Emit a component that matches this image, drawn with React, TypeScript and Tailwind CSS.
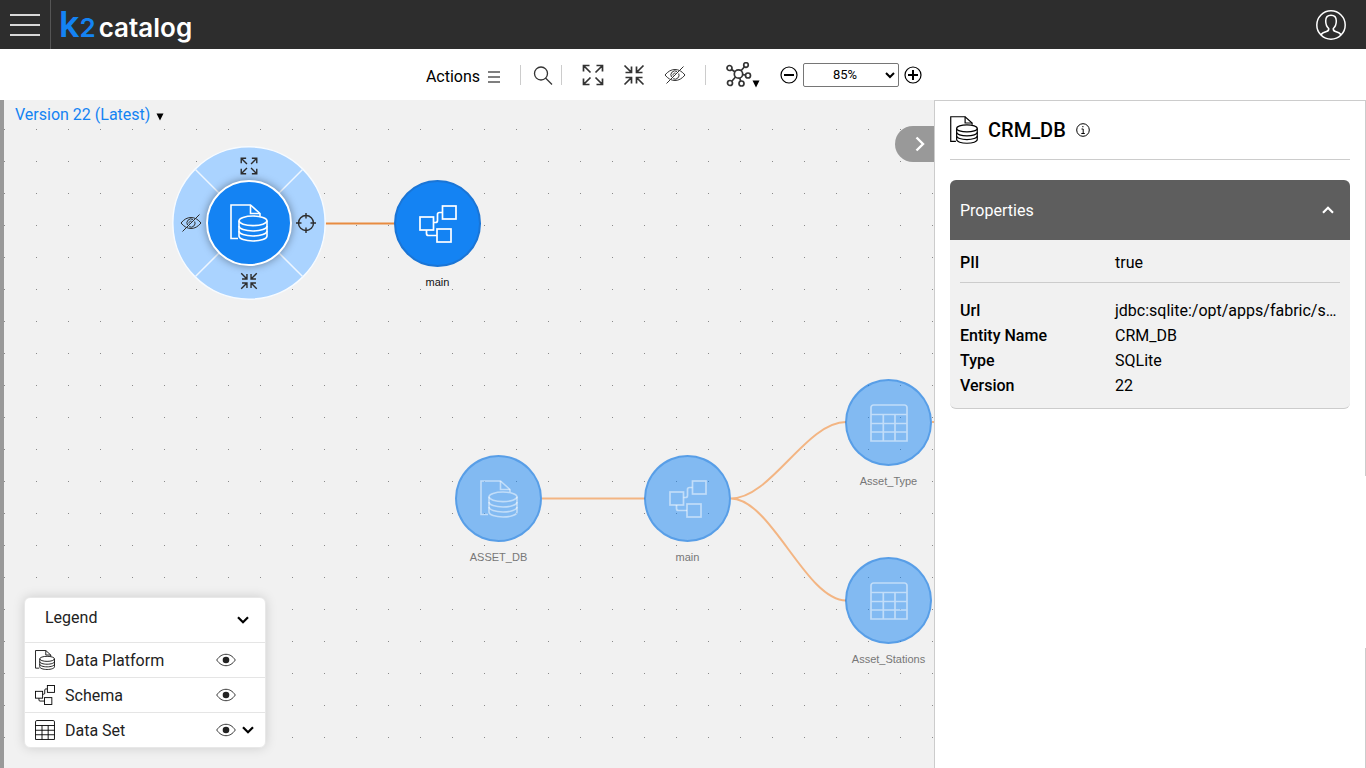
import { useState } from "react";
import type { ReactNode } from "react";

type IconProps = { className?: string };

function PlatformIcon({ className }: IconProps) {
  return (
    <svg className={className} viewBox="0 0 38 38" fill="none" stroke="currentColor" strokeWidth="1.6" aria-hidden="true">
      <path d="M8 34.5H1V1h19.5L30 9.5V12" />
      <path d="M20.5 1v8.5H30" />
      <ellipse cx="23" cy="16.8" rx="14" ry="4.8" />
      <path d="M9 16.8V32c0 2.8 6.3 5 14 5s14-2.2 14-5V16.8" />
      <path d="M9 22c0 2.8 6.3 5 14 5s14-2.2 14-5M9 27c0 2.8 6.3 5 14 5s14-2.2 14-5" />
    </svg>
  );
}

function SchemaIcon({ className }: IconProps) {
  return (
    <svg className={className} viewBox="0 0 38 38" fill="none" stroke="currentColor" strokeWidth="1.7" aria-hidden="true">
      <rect x="1" y="12" width="13.5" height="13" />
      <rect x="23.5" y="1" width="13.5" height="13" />
      <rect x="18" y="24" width="14" height="13" />
      <path d="M14.5 17.5h2a2 2 0 0 0 2-2v-6a2 2 0 0 1 2-2h3M7.5 25v3.5a2 2 0 0 0 2 2H18" />
    </svg>
  );
}

function TableIcon({ className }: IconProps) {
  return (
    <svg className={className} viewBox="0 0 38 38" fill="none" stroke="currentColor" strokeWidth="1.7" aria-hidden="true">
      <path d="M1 37V3.5A2.5 2.5 0 0 1 3.5 1h31A2.5 2.5 0 0 1 37 3.5V37zM1 10.5h36M1 19.5h36M1 28h36M13.3 10.5V37M25 10.5V37" />
    </svg>
  );
}

function ExpandIcon({ className }: IconProps) {
  return (
    <svg className={className} viewBox="0 0 22 22" fill="none" stroke="currentColor" strokeWidth="1.7" aria-hidden="true">
      <path d="M1.5 7.5v-6h6M1.5 1.5l7 7M14.5 1.5h6v6M20.5 1.5l-7 7M1.5 14.5v6h6M1.5 20.5l7-7M20.5 14.5v6h-6M20.5 20.5l-7-7" />
    </svg>
  );
}

function CollapseIcon({ className }: IconProps) {
  return (
    <svg className={className} viewBox="0 0 22 22" fill="none" stroke="currentColor" strokeWidth="1.7" aria-hidden="true">
      <path d="M8.5 2.5v6h-6M8.5 8.5l-7-7M13.5 2.5v6h6M13.5 8.5l7-7M8.5 19.5v-6h-6M8.5 13.5l-7 7M13.5 19.5v-6h6M13.5 13.5l7 7" />
    </svg>
  );
}

function HiddenIcon({ className }: IconProps) {
  return (
    <svg className={className} viewBox="0 0 22 20" fill="none" stroke="currentColor" strokeWidth="1" aria-hidden="true">
      <path d="M1 10c3-3.7 6.3-5.5 10-5.5s7 1.8 10 5.5c-3 3.7-6.3 5.500-10 5.500S4 13.700 1 10z" />
      <path d="M7.5 12a4 4 0 0 1 5.5-5.5M14.7 8.5a4 4 0 0 1-5.5 5.2M9 10.5a2 2 0 0 1 2.5-2.3" />
      <path d="M2.5 18.5l17-17" />
    </svg>
  );
}

function TargetIcon({ className }: IconProps) {
  return (
    <svg className={className} viewBox="0 0 20 20" fill="none" stroke="currentColor" strokeWidth="1.4" aria-hidden="true">
      <circle cx="10" cy="10" r="7.5" />
      <path d="M10 0v5.5M10 14.5V20M0 10h5.5M14.5 10H20" />
    </svg>
  );
}

function EyeIcon({ className }: IconProps) {
  return (
    <svg className={className} viewBox="0 0 20 14" fill="none" stroke="currentColor" aria-hidden="true">
      <path d="M.7 7C3.5 3 6.5 1.3 10 1.3s6.5 1.7 9.3 5.7c-2.8 4-5.8 5.7-9.3 5.7S3.5 11 .7 7z" strokeWidth=".9" />
      <circle cx="10" cy="7" r="3.3" fill="currentColor" stroke="none" />
    </svg>
  );
}

function ChevronIcon({ className }: IconProps) {
  return (
    <svg className={className} viewBox="0 0 12 8" fill="none" stroke="currentColor" strokeWidth="2.2" aria-hidden="true">
      <path d="M1 1.2l5 5 5-5" />
    </svg>
  );
}

function NetworkIcon({ className }: IconProps) {
  return (
    <svg className={className} viewBox="0 0 26 26" fill="none" stroke="currentColor" strokeWidth="1.7" aria-hidden="true">
      <circle cx="12.5" cy="12" r="4.2" />
      <circle cx="3.5" cy="6" r="2.5" />
      <circle cx="20" cy="3" r="2.3" />
      <circle cx="22" cy="13.5" r="2.5" />
      <circle cx="4" cy="21" r="2.5" />
      <circle cx="15.5" cy="21.5" r="2.5" />
      <path d="M5.6 7.5l3.2 2.2M18.5 4.8l-3.5 4M16.7 12.6l2.8.4M9.5 15l-3.7 4.2M13.7 16l1 3" />
    </svg>
  );
}

function Caret({ className }: IconProps) {
  return (
    <svg className={className} viewBox="0 0 8 8" fill="currentColor" aria-hidden="true">
      <path d="M.5.5h7L4 7.5z" />
    </svg>
  );
}

function Header() {
  return (
    <header className="flex h-[49px] shrink-0 items-stretch justify-between bg-[#2d2d2d]">
      <div className="flex">
        <button type="button" aria-label="Menu" className="flex w-[51px] items-center border-r border-[#555] pl-2.5">
          <svg className="h-6 w-[30px]" viewBox="0 0 30 24" stroke="#d8d8d8" strokeWidth="2" aria-hidden="true">
            <path d="M0 2h30M0 12h30M0 22h30" />
          </svg>
        </button>
        <a href="#home" className="flex items-baseline pl-2 font-['Inter',sans-serif] leading-[56px]">
          <span className="text-4xl font-semibold text-[#1483f3]">
            k<span className="text-[26px]">2</span>
          </span>
          <span className="pl-[3px] text-[26px] font-semibold text-white">catalog</span>
        </a>
      </div>
      <button type="button" aria-label="Account" className="pr-5 text-white">
        <svg className="size-[30px]" viewBox="0 0 30 30" fill="none" stroke="currentColor" strokeWidth="1.5" aria-hidden="true">
          <circle cx="15" cy="15" r="14.2" />
          <path d="M5 24.8c1-1.8 3-2.6 5.5-3.3 2-.6 2.5-1.2 2.2-3C10.800 16.800 9.700 14.500 9.700 11c0-3.500 2-5.700 5.300-5.700s5.300 2.200 5.300 5.700c0 3.500-1.100 5.800-3 7.500-.3 1.800.2 2.400 2.200 3 2.500.7 4.500 1.500 5.500 3.300" />
        </svg>
      </button>
    </header>
  );
}

function Divider() {
  return <span className="h-5 w-px bg-[#ccc]" />;
}

function Toolbar() {
  const [zoom, setZoom] = useState("85%");
  return (
    <div className="flex h-[51px] shrink-0 items-center justify-center bg-white pr-[18px] text-[#333]">
      <button type="button" className="flex items-center gap-2 pr-5 pt-1 text-base text-black">
        Actions
        <svg className="h-3 w-3" viewBox="0 0 12 12" stroke="currentColor" strokeWidth="1.2" aria-hidden="true">
          <path d="M0 1h12M0 6h12M0 11h12" />
        </svg>
      </button>
      <Divider />
      <button type="button" aria-label="Search" className="pl-3 pr-2">
        <svg className="size-5" viewBox="0 0 20 20" fill="none" stroke="currentColor" strokeWidth="1.3" aria-hidden="true">
          <circle cx="8" cy="8.500" r="6.5" />
          <path d="M12.5 13l6.500 6.500" />
        </svg>
      </button>
      <Divider />
      <div className="flex items-center gap-[19px] pl-5 pr-[19px]">
        <button type="button" aria-label="Expand all"><ExpandIcon className="size-[22px]" /></button>
        <button type="button" aria-label="Collapse all"><CollapseIcon className="size-[22px]" /></button>
        <button type="button" aria-label="Hide"><HiddenIcon className="h-5 w-[22px]" /></button>
      </div>
      <Divider />
      <button type="button" aria-label="Layout" className="flex items-end px-5">
        <NetworkIcon className="size-[26px]" />
        <Caret className="size-2 text-black" />
      </button>
      <button type="button" aria-label="Zoom out" className="text-black">
        <svg className="size-[18px]" viewBox="0 0 18 18" fill="none" stroke="currentColor" strokeWidth="1.2" aria-hidden="true">
          <circle cx="9" cy="9" r="8" />
          <path d="M4 9h10" strokeWidth="2" />
        </svg>
      </button>
      <select
        aria-label="Zoom level"
        value={zoom}
        onChange={(e) => setZoom(e.target.value)}
        className="mx-[5px] h-6 w-24 rounded-xs border border-[#767676] bg-white text-center text-[13px] text-black"
      >
        <option>50%</option>
        <option>85%</option>
        <option>100%</option>
      </select>
      <button type="button" aria-label="Zoom in" className="text-black">
        <svg className="size-[18px]" viewBox="0 0 18 18" fill="none" stroke="currentColor" strokeWidth="1.2" aria-hidden="true">
          <circle cx="9" cy="9" r="8" />
          <path d="M4 9h10M9 4v10" strokeWidth="2" />
        </svg>
      </button>
    </div>
  );
}

function GraphNode({ place, label, faded = false, children }: { place: string; label: string; faded?: boolean; children: ReactNode }) {
  return (
    <button type="button" className={`absolute flex w-[87px] flex-col items-center gap-[7px] ${place}`}>
      <span
        className={
          faded
            ? "flex size-[87px] items-center justify-center rounded-full border-2 border-[#1a75d6]/40 bg-[#1483f3]/50 text-white/50"
            : "flex size-[87px] items-center justify-center rounded-full border-2 border-[#1a75d6] bg-[#1483f3] text-white"
        }
      >
        {children}
      </span>
      <span className={`whitespace-nowrap font-['Liberation_Sans',sans-serif] text-[11px] leading-4 ${faded ? "text-[#777]" : "text-[#111]"}`}>
        {label}
      </span>
    </button>
  );
}

function RadialMenu() {
  return (
    <div className="absolute left-[168px] top-[46px] size-[154px] text-[#2d2d2d]">
      <svg className="size-full" viewBox="0 0 154 154" aria-hidden="true">
        <circle cx="77" cy="77" r="76.2" fill="#aad3ff" stroke="#f7fbff" strokeWidth="1.5" />
        <path d="M23.2 23.2l107.6 107.6M130.8 23.2L23.2 130.8" stroke="#eef6ff" strokeWidth="1.5" />
      </svg>
      <button type="button" aria-label="Expand node" className="absolute left-[68px] top-[11px]"><ExpandIcon className="size-[18px]" /></button>
      <button type="button" aria-label="Focus node" className="absolute left-[124px] top-[67px]"><TargetIcon className="size-5" /></button>
      <button type="button" aria-label="Collapse node" className="absolute left-[68px] top-[126px]"><CollapseIcon className="size-[18px]" /></button>
      <button type="button" aria-label="Hide node" className="absolute left-2 top-[67px]"><HiddenIcon className="h-5 w-[22px]" /></button>
      <button
        type="button"
        aria-label="CRM_DB"
        className="absolute left-[34px] top-[34px] flex size-[86px] items-center justify-center rounded-full border-2 border-white bg-[#1483f3] text-white shadow-[0_0_8px_rgba(0,0,0,0.4)]"
      >
        <PlatformIcon className="size-[38px]" />
      </button>
    </div>
  );
}

const legend = [
  { name: "Data Platform", Icon: PlatformIcon, more: false },
  { name: "Schema", Icon: SchemaIcon, more: false },
  { name: "Data Set", Icon: TableIcon, more: true },
];

function Legend() {
  return (
    <section className="absolute bottom-5 left-5 w-[242px] rounded-md border border-[#e8e8e8] bg-white text-base text-[#222] shadow-[0_0_12px_rgba(0,0,0,0.15)]">
      <h2>
        <button type="button" className="flex h-11 w-full items-center justify-between pb-1 pl-5 pr-4">
          Legend
          <ChevronIcon className="mt-1 h-2 w-3 text-black" />
        </button>
      </h2>
      <ul>
        {legend.map(({ name, Icon, more }) => (
          <li key={name} className="flex h-[35px] items-center border-t border-[#e5e5e5] pl-2.5">
            <Icon className="size-5 text-black" />
            <span className="flex-1 pl-2.5 pt-0.5">{name}</span>
            <button type="button" aria-label={`Show ${name}`}><EyeIcon className="h-3.5 w-5" /></button>
            <span className="flex w-[29px] pl-1.5">
              {more && <button type="button" aria-label={`More ${name}`}><ChevronIcon className="h-2 w-3 text-black" /></button>}
            </span>
          </li>
        ))}
      </ul>
    </section>
  );
}

function Canvas() {
  return (
    <main className="relative min-w-0 flex-1 overflow-hidden border-l-4 border-[#999] bg-[#f1f1f1]">
      <svg className="absolute inset-0 size-full" aria-hidden="true">
        <defs>
          <pattern id="dots" width="32" height="32" patternUnits="userSpaceOnUse">
            <rect x="0" y="29" width="1" height="1" fill="#8a8a8a" />
          </pattern>
        </defs>
        <rect width="100%" height="100%" fill="url(#dots)" />
        <g fill="none" strokeWidth="2">
          <path d="M321 123.5h70" stroke="#e88b40" />
          <path d="M538 398.5h103M727 398.5C767 398.5 802 322 842 322M727 398.5C767 398.5 802 500.5 842 500.5M928 322h1000" stroke="#f3b583" />
        </g>
      </svg>
      <button type="button" className="relative ml-[11px] mt-[3px] flex items-center gap-1.5 text-base text-[#1483f3]">
        Version 22 (Latest)
        <Caret className="mt-1 size-2 text-black" />
      </button>
      <RadialMenu />
      <GraphNode place="left-[390px] top-20" label="main"><SchemaIcon className="size-[38px]" /></GraphNode>
      <GraphNode place="left-[451px] top-[355px]" label="ASSET_DB" faded><PlatformIcon className="size-[38px]" /></GraphNode>
      <GraphNode place="left-[640px] top-[355px]" label="main" faded><SchemaIcon className="size-[38px]" /></GraphNode>
      <GraphNode place="left-[841px] top-[279px]" label="Asset_Type" faded><TableIcon className="size-[38px]" /></GraphNode>
      <GraphNode place="left-[841px] top-[457px]" label="Asset_Stations" faded><TableIcon className="size-[38px]" /></GraphNode>
      <button type="button" aria-label="Hide details" className="absolute right-0 top-[26px] flex h-9 w-[39px] items-center justify-center rounded-l-full bg-[#999] pl-2.5 text-white">
        <svg className="h-4 w-2.5" viewBox="0 0 10 16" fill="none" stroke="currentColor" strokeWidth="2.4" aria-hidden="true">
          <path d="M1.5 1.5L8 8l-6.5 6.5" />
        </svg>
      </button>
      <Legend />
    </main>
  );
}

const properties = [
  ["Url", "jdbc:sqlite:/opt/apps/fabric/s…"],
  ["Entity Name", "CRM_DB"],
  ["Type", "SQLite"],
  ["Version", "22"],
];

function Property({ name, value }: { name: string; value: string }) {
  return (
    <div className="flex leading-[25px]">
      <dt className="w-[155px] shrink-0 font-medium">{name}</dt>
      <dd>{value}</dd>
    </div>
  );
}

function Details() {
  return (
    <aside className="relative w-[432px] shrink-0 border-x border-t border-[#ccc] bg-white px-[15px] text-base text-black">
      <div className="flex h-[59px] items-center border-b border-[#ccc]">
        <PlatformIcon className="size-7" />
        <h1 className="pl-2.5 text-xl font-medium">CRM_DB</h1>
        <button type="button" aria-label="Information" className="pl-2.5">
          <svg className="size-3.5" viewBox="0 0 14 14" fill="none" stroke="currentColor" aria-hidden="true">
            <circle cx="7" cy="7" r="6.3" />
            <path d="M5.5 6h1.700v4.300M5.300 10.500h3.500M6.200 3.700h1.300" />
          </svg>
        </button>
      </div>
      <section className="mt-5 overflow-hidden rounded-md border-b border-[#ccc] bg-[#f1f1f1]">
        <h2>
          <button type="button" className="flex h-[60px] w-full items-center justify-between bg-[#5e5e5e] pl-2.5 pr-4 text-white">
            <span className="pt-0.5">Properties</span>
            <ChevronIcon className="h-2 w-3 rotate-180" />
          </button>
        </h2>
        <div className="p-2.5">
          <dl className="border-b border-[#ccc] pb-[7px]">
            <Property name="PII" value="true" />
          </dl>
          <dl className="pt-[15px]">
            {properties.map(([name, value]) => (
              <Property key={name} name={name} value={value} />
            ))}
          </dl>
        </div>
      </section>
      <div className="absolute -right-px bottom-[120px] h-[172px] w-px bg-white" />
    </aside>
  );
}

export default function App() {
  return (
    <div className="flex min-h-screen flex-col bg-white font-['Roboto',sans-serif]">
      <Header />
      <Toolbar />
      <div className="flex flex-1 items-stretch">
        <Canvas />
        <Details />
      </div>
    </div>
  );
}
